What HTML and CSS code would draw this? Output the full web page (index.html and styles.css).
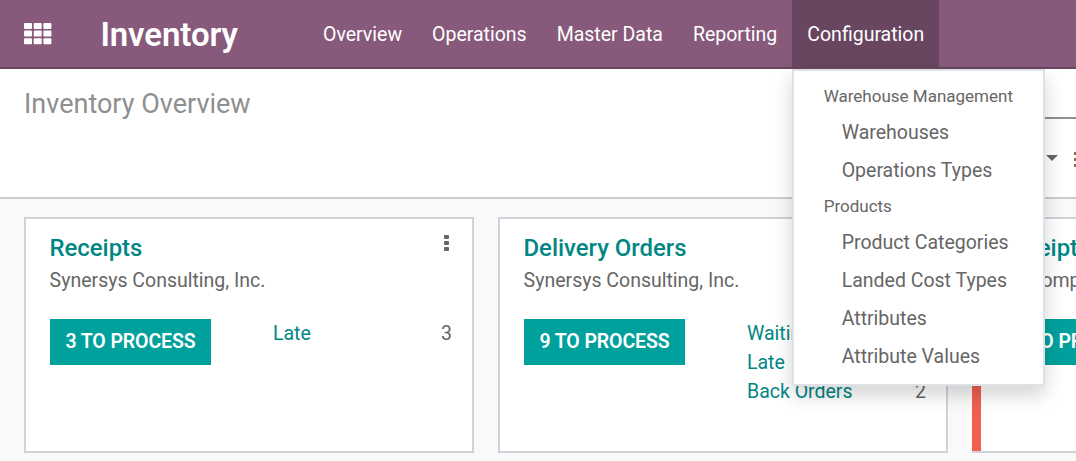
FILE: index.html
```html
<!DOCTYPE html>
<html lang="en">
<head>
<meta charset="utf-8">
<title>Inventory Overview</title>
<link rel="stylesheet" href="styles.css">
</head>
<body>
<header class="navbar">
  <svg class="apps" width="28" height="22" viewBox="0 0 28 22" fill="#fff"><rect width="8" height="6" rx="1"/><rect x="9.7" width="8" height="6" rx="1"/><rect x="19.4" width="8" height="6" rx="1"/><rect y="7.6" width="8" height="6" rx="1"/><rect x="9.7" y="7.6" width="8" height="6" rx="1"/><rect x="19.4" y="7.6" width="8" height="6" rx="1"/><rect y="15.2" width="8" height="6" rx="1"/><rect x="9.7" y="15.2" width="8" height="6" rx="1"/><rect x="19.4" y="15.2" width="8" height="6" rx="1"/></svg>
  <div class="brand">Inventory</div>
  <nav class="nav">
    <a class="nav-item">Overview</a>
    <a class="nav-item">Operations</a>
    <a class="nav-item">Master Data</a>
    <a class="nav-item">Reporting</a>
    <div class="nav-item active">Configuration
      <div class="menu">
        <div class="menu-header">Warehouse Management</div>
        <a class="menu-item">Warehouses</a>
        <a class="menu-item">Operations Types</a>
        <div class="menu-header">Products</div>
        <a class="menu-item">Product Categories</a>
        <a class="menu-item">Landed Cost Types</a>
        <a class="menu-item">Attributes</a>
        <a class="menu-item">Attribute Values</a>
      </div>
    </div>
  </nav>
</header>
<section class="control-panel">
  <h1 class="page-title">Inventory Overview</h1>
  <div class="search">
    <div class="search-line"></div>
    <div class="search-tools">
      <svg width="12" height="6" viewBox="0 0 12 6"><path d="M0 0H12L6 6Z" fill="#666"/></svg>
      <svg width="2" height="15" viewBox="0 0 2 15" fill="#8a6a48"><path d="M0 0h2v3H0zM0 6h2v3H0zM0 12h2v3H0z"/></svg>
    </div>
  </div>
</section>
<main class="board">
  <article class="card">
    <div class="card-head">
      <h2 class="card-title">Receipts</h2>
      <svg class="dots" width="5" height="16" viewBox="0 0 5 16" fill="#666"><rect width="5" height="4" rx="1"/><rect y="6" width="5" height="4" rx="1"/><rect y="12" width="5" height="4" rx="1"/></svg>
    </div>
    <div class="company">Synersys Consulting, Inc.</div>
    <div class="card-body">
      <button class="process">3 TO PROCESS</button>
      <div class="stats"><div class="stat"><a>Late</a><span>3</span></div></div>
    </div>
  </article>
  <article class="card">
    <div class="card-head"><h2 class="card-title">Delivery Orders</h2></div>
    <div class="company">Synersys Consulting, Inc.</div>
    <div class="card-body">
      <button class="process">9 TO PROCESS</button>
      <div class="stats">
        <div class="stat"><a>Waiting</a></div>
        <div class="stat"><a>Late</a></div>
        <div class="stat"><a>Back Orders</a><span>2</span></div>
      </div>
    </div>
  </article>
  <article class="card flagged">
    <div class="card-head"><h2 class="card-title">Receipts</h2></div>
    <div class="company">My Company</div>
    <div class="card-body"><button class="process">0 TO PROCESS</button></div>
  </article>
</main>
</body>
</html>
```
FILE: styles.css
```css
* { box-sizing: border-box; }
body {
  margin: 0;
  height: 461px;
  overflow: hidden;
  display: flex;
  flex-direction: column;
  background: #f9f9f9;
  color: #666;
  font: 19.5px/29px Roboto, sans-serif;
}
.navbar {
  display: flex;
  flex: none;
  height: 69px;
  padding-left: 24px;
  background: #875a7b;
  border-bottom: 2px solid #68465f;
  color: #fff;
}
.apps { margin-top: 22.6px; }
.brand {
  width: 208px;
  padding-left: 48.4px;
  margin-right: 48px;
  font-size: 33px;
  font-weight: 600;
  letter-spacing: -.1px;
  line-height: 70px;
}
.nav { display: flex; height: 69px; white-space: nowrap; }
.nav-item { padding: 0 15px; line-height: 70px; }
.active { position: relative; background: #68465f; }
.menu {
  position: absolute;
  z-index: 2;
  top: 69px;
  left: 0;
  width: 253px;
  height: 317px;
  padding: 8px 0;
  background: #fff;
  border: 2px solid #dee2e6;
  box-shadow: 0 9px 18px rgba(0, 0, 0, .175);
  color: #666;
}
.menu-header { height: 34px; padding-left: 29.4px; font-size: 17px; line-height: 34px; }
.menu-item { display: block; height: 38px; padding-left: 47.4px; line-height: 40px; }
.control-panel {
  display: flex;
  flex: none;
  justify-content: space-between;
  height: 130px;
  padding-left: 24px;
  background: #fff;
  border-bottom: 2px solid #ccc;
}
.page-title { margin: 17px 0 0; font-size: 27px; font-weight: 400; line-height: 36px; color: #8f8f8f; }
.search { width: 200px; padding-top: 48px; }
.search-line { height: 2px; background: #8f8f8f; }
.search-tools { display: flex; justify-content: flex-end; gap: 16px; margin-top: 33px; }
.search-tools svg:first-child { margin-top: 3px; }
.board { display: flex; gap: 24px; padding: 18px 0 0 24px; overflow: hidden; }
.card {
  flex: none;
  width: 450px;
  height: 236px;
  padding: 14px 20px 0 24px;
  background: #fff;
  border: 2px solid #ced2d9;
}
.flagged {
  border-left: 0;
  padding-left: 26px;
  background: linear-gradient(to right, #f06050 9px, #fff 9px) padding-box;
}
.card-head { display: flex; justify-content: space-between; height: 32px; }
.card-title { margin: 0 0 0 -.5px; font-size: 23.9px; font-weight: 500; line-height: 30px; color: #008784; }
.dots { margin: 2px 3px 0 0; }
.company { margin-left: -.4px; line-height: 31px; }
.card-body { display: flex; justify-content: space-between; margin-top: 23px; }
.process {
  width: 161px;
  height: 46px;
  padding: 0;
  border: 0;
  background: #00a09d;
  color: #fff;
  font: 600 19.5px/44px Roboto, sans-serif;
  letter-spacing: -.1px;
}
.stats { width: 179px; }
.stat { display: flex; justify-content: space-between; }
.stat a { color: #008784; }
```
